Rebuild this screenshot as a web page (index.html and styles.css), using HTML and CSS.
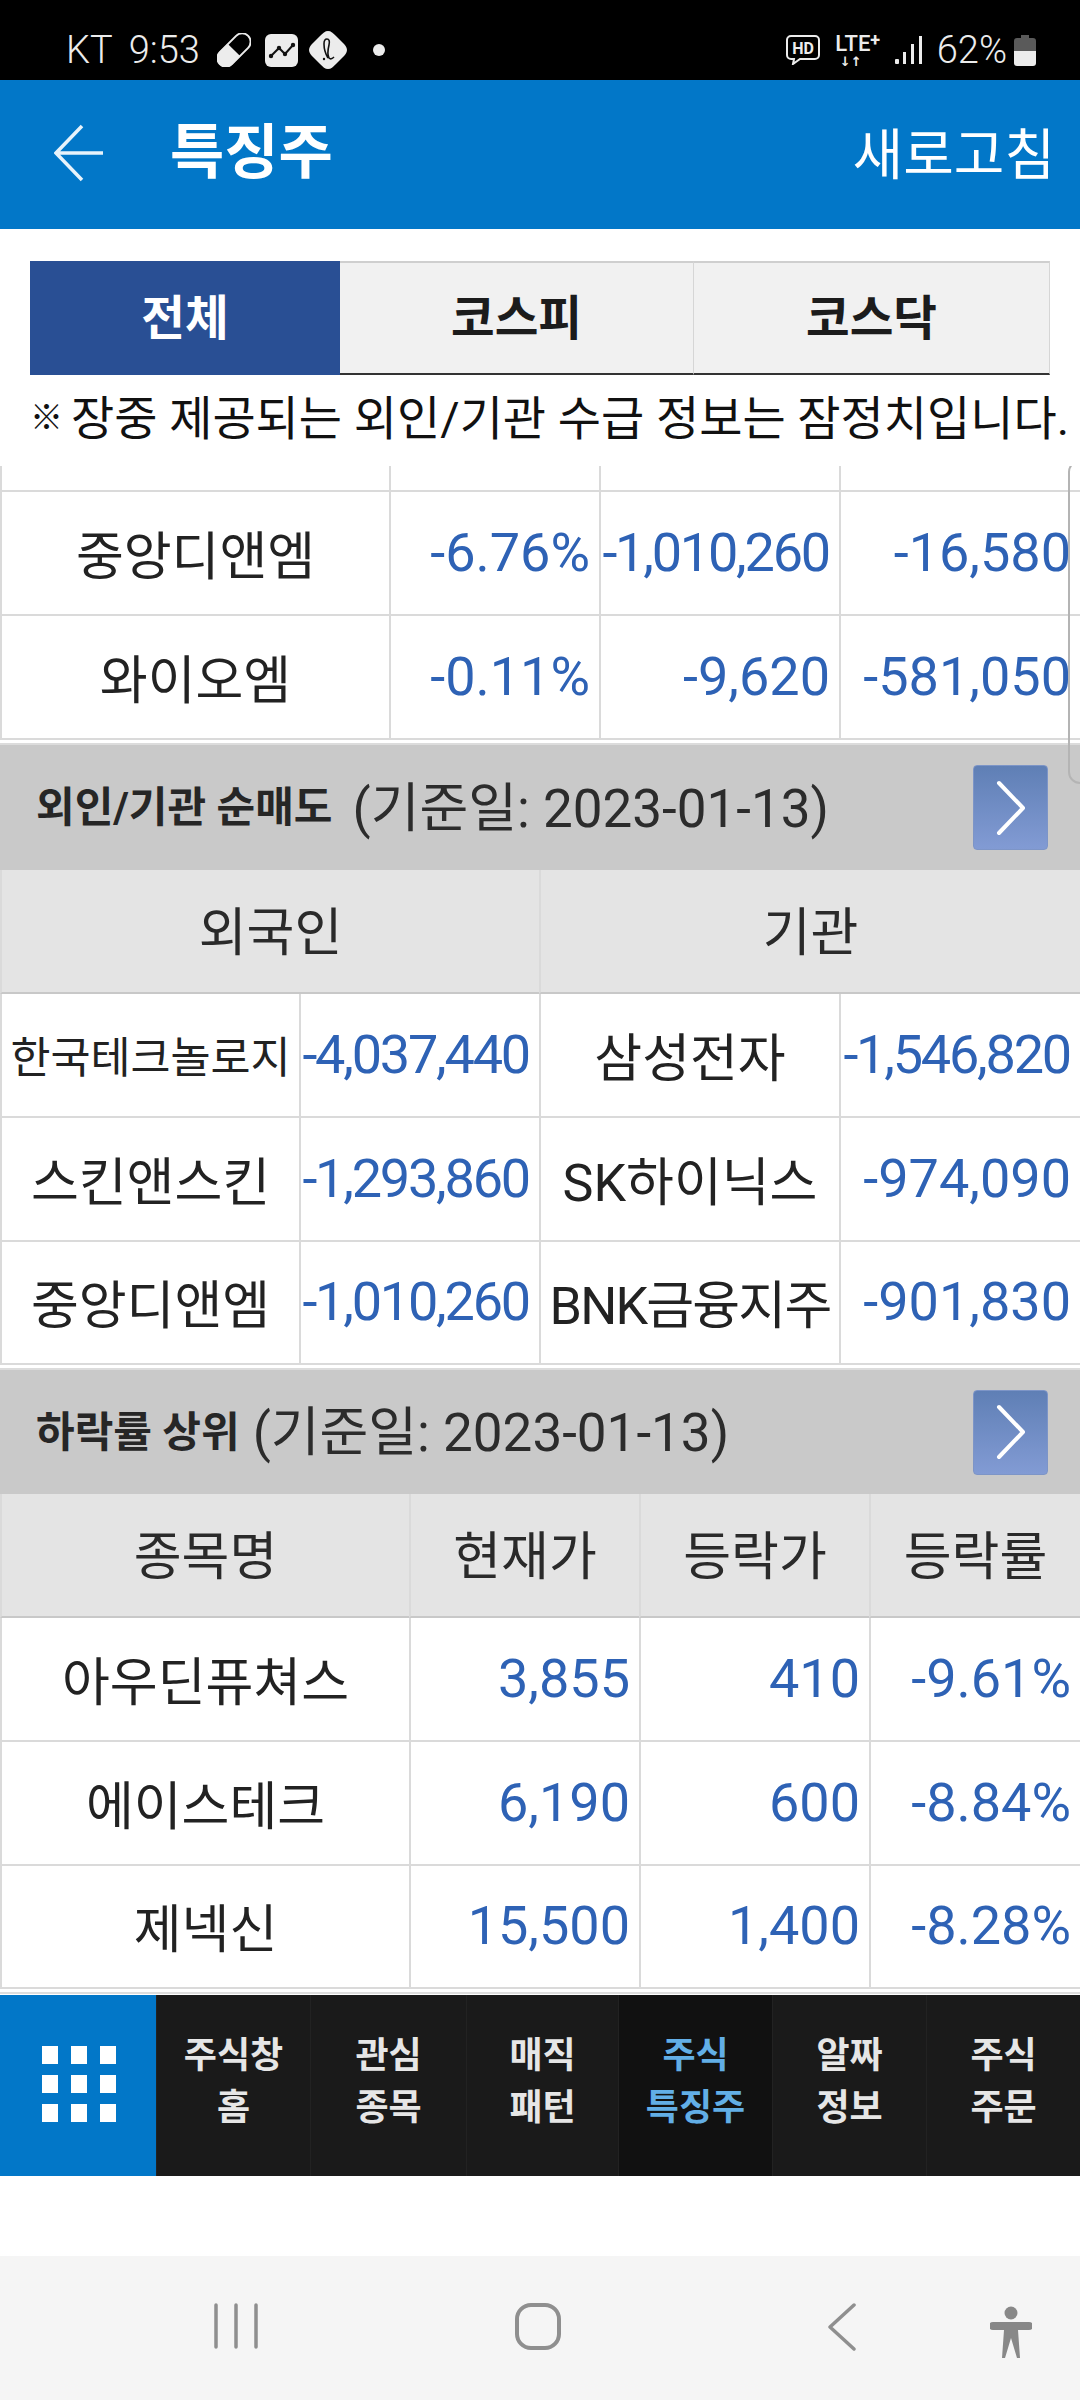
FILE: index.html
```html
<!DOCTYPE html>
<html lang="ko">
<head>
    <meta charset="UTF-8">
    <meta name="viewport" content="width=device-width, initial-scale=1.0">
    <title>특징주</title>
    <link rel="stylesheet" href="styles.css">
</head>
<body>
    <!-- 상태바 -->
    <div class="status-bar">
        <span class="status-text carrier">KT</span>
        <span class="status-text clock">9:53</span>
        <svg class="ico-pill" width="34" height="34" viewBox="0 0 34 34">
            <g transform="rotate(45 17 17)">
                <rect x="8.5" y="-3" width="17" height="40" rx="8.5" fill="none" stroke="#ececec" stroke-width="2"/>
                <path d="M8 17h18v11.500a9 9 0 0 1-18 0z" fill="#ececec"/>
            </g>
        </svg>
        <svg class="ico-chart" width="33" height="33" viewBox="0 0 33 33">
            <rect width="33" height="33" rx="6" fill="#ececec"/>
            <path d="M6 22l8-8 6 6 8-9" fill="none" stroke="#111" stroke-width="2"/>
            <circle cx="6" cy="22" r="2.200" fill="#111"/><circle cx="14" cy="14" r="2.200" fill="#111"/>
            <circle cx="20" cy="20" r="2.200" fill="#111"/><circle cx="28" cy="11" r="2.200" fill="#111"/>
        </svg>
        <svg class="ico-drop" width="38" height="38" viewBox="0 0 38 38">
            <path d="M19 0c3 0 5 2 8 5l6 6c3 3 5 5 5 8s-2 5-5 8l-6 6c-3 3-5 5-8 5s-5-2-8-5l-6-6c-3-3-5-5-5-8s2-5 5-8l6-6c3-3 5-5 8-5z" fill="#ececec"/>
            <path d="M19 27c-3-5-4-10-4-14 0-3 1-5 3-5s3 2 2 6c-1 4-2 9 0 13 1 1 3 1 5-1" fill="none" stroke="#111" stroke-width="1.600"/>
            <circle cx="15" cy="28" r="1.200" fill="#111"/>
        </svg>
        <span class="status-dot"></span>
        <span class="status-right">
            <svg class="ico-hd" width="36" height="30" viewBox="0 0 36 30">
                <path d="M6 1h24a4 4 0 0 1 4 4v15a4 4 0 0 1-4 4H15l-7 5 1-5H6a4 4 0 0 1-4-4V5a4 4 0 0 1 4-4z" fill="none" stroke="#ececec" stroke-width="2"/>
                <text x="18" y="19" class="svg-hd" text-anchor="middle">HD</text>
            </svg>
            <span class="lte">
                <span class="lte-text">LTE<b>+</b></span>
                <span class="lte-arrows">↓↑</span>
            </span>
            <svg class="ico-signal" width="28" height="28" viewBox="0 0 28 28">
                <rect x="0" y="23" width="4" height="5" rx="1" fill="#ececec"/>
                <rect x="8" y="16" width="3" height="12" fill="#ececec"/>
                <rect x="16" y="8" width="3" height="20" fill="#ececec"/>
                <rect x="24" y="0" width="3" height="28" fill="#ececec"/>
            </svg>
            <span class="status-text battery-text">62%</span>
            <svg class="ico-battery" width="22" height="31" viewBox="0 0 22 31">
                <path d="M7 0h8v3h4a3 3 0 0 1 3 3v10H0V6a3 3 0 0 1 3-3h4z" fill="#5a5a5a"/>
                <path d="M0 16h22v12a3 3 0 0 1-3 3H3a3 3 0 0 1-3-3z" fill="#ececec"/>
            </svg>
        </span>
    </div>

    <!-- 상단 타이틀 -->
    <header class="app-bar">
        <svg class="back-arrow" width="50" height="58" viewBox="0 0 50 58">
            <path d="M28 2L2 29l26 27M2 29h47" fill="none" stroke="#e8f3fb" stroke-width="3.500"/>
        </svg>
        <h1 class="app-title">특징주</h1>
        <span class="refresh">새로고침</span>
    </header>

    <div class="tabs">
        <div class="tab tab-all active">전체</div>
        <div class="tab tab-kospi">코스피</div>
        <div class="tab tab-kosdaq">코스닥</div>
    </div>

    <p class="notice"><span class="mark">※</span><span>장중 제공되는 외인/기관 수급 정보는 잠정치입니다.</span></p>

    <div class="content">
        <div class="scroll-thumb"></div>

        <table class="grid grid-top">
            <colgroup><col class="w389"><col class="w210"><col class="w240"><col class="w241"></colgroup>
            <tr class="stub"><td></td><td></td><td></td><td></td></tr>
            <tr><td class="name">중앙디앤엠</td><td class="num">-6.76%</td><td class="num tight">-1,010,260</td><td class="num">-16,580</td></tr>
            <tr><td class="name">와이오엠</td><td class="num">-0.11%</td><td class="num">-9,620</td><td class="num">-581,050</td></tr>
        </table>

        <div class="section-head section-sell">
            <span class="section-title">외인/기관 순매도</span>
            <span class="section-date">(기준일: 2023-01-13)</span>
            <span class="more-btn">
                <svg width="30" height="56" viewBox="0 0 30 56"><path d="M3 3l24 25L3 53" fill="none" stroke="#fff" stroke-width="4" stroke-linecap="round" stroke-linejoin="round"/></svg>
            </span>
        </div>
        <table class="grid">
            <colgroup><col class="w299"><col class="w240"><col class="w300"><col class="w241"></colgroup>
            <tr class="head"><th colspan="2">외국인</th><th colspan="2">기관</th></tr>
            <tr><td class="name name-sm">한국테크놀로지</td><td class="num tight">-4,037,440</td><td class="name">삼성전자</td><td class="num tight">-1,546,820</td></tr>
            <tr><td class="name">스킨앤스킨</td><td class="num tight">-1,293,860</td><td class="name">SK하이닉스</td><td class="num">-974,090</td></tr>
            <tr class="last"><td class="name">중앙디앤엠</td><td class="num tight">-1,010,260</td><td class="name name-bnk">BNK금융지주</td><td class="num">-901,830</td></tr>
        </table>

        <div class="section-head section-fall">
            <span class="section-title">하락률 상위</span>
            <span class="section-date">(기준일: 2023-01-13)</span>
            <span class="more-btn">
                <svg width="30" height="56" viewBox="0 0 30 56"><path d="M3 3l24 25L3 53" fill="none" stroke="#fff" stroke-width="4" stroke-linecap="round" stroke-linejoin="round"/></svg>
            </span>
        </div>
        <table class="grid">
            <colgroup><col class="w409"><col class="w230"><col class="w230"><col class="w211"></colgroup>
            <tr class="head"><th>종목명</th><th>현재가</th><th>등락가</th><th>등락률</th></tr>
            <tr><td class="name">아우딘퓨쳐스</td><td class="num">3,855</td><td class="num">410</td><td class="num">-9.61%</td></tr>
            <tr><td class="name">에이스테크</td><td class="num">6,190</td><td class="num">600</td><td class="num">-8.84%</td></tr>
            <tr class="last"><td class="name">제넥신</td><td class="num">15,500</td><td class="num">1,400</td><td class="num">-8.28%</td></tr>
        </table>
        <div class="end-line"></div>
    </div>

    <!-- 하단 메뉴 -->
    <nav class="menu">
        <div class="menu-home">
            <div class="dots">
                <i></i><i></i><i></i><i></i><i></i><i></i><i></i><i></i><i></i>
            </div>
        </div>
        <div class="menu-item">주식창<br>홈</div>
        <div class="menu-item">관심<br>종목</div>
        <div class="menu-item">매직<br>패턴</div>
        <div class="menu-item current">주식<br>특징주</div>
        <div class="menu-item">알짜<br>정보</div>
        <div class="menu-item">주식<br>주문</div>
    </nav>

    <div class="blank"></div>

    <div class="system-nav">
        <svg class="sys-recent" width="44" height="46" viewBox="0 0 44 46">
            <path d="M2 2v42M22 2v42M42 2v42" fill="none" stroke="#8f8f8f" stroke-width="3.500" stroke-linecap="round"/>
        </svg>
        <svg class="sys-home" width="46" height="47" viewBox="0 0 46 47">
            <rect x="2" y="2" width="42" height="43" rx="14" fill="none" stroke="#8f8f8f" stroke-width="4"/>
        </svg>
        <svg class="sys-back" width="28" height="48" viewBox="0 0 28 48">
            <path d="M26 2L2 24l24 22" fill="none" stroke="#8f8f8f" stroke-width="3.500" stroke-linecap="round" stroke-linejoin="round"/>
        </svg>
        <svg class="sys-a11y" width="42" height="52" viewBox="0 0 42 52">
            <circle cx="21" cy="7" r="6.500" fill="#888"/>
            <path d="M3 16h36a3 3 0 0 1 0 8H28l2 28h-3l-6-20-6 20h-3l2-28H3a3 3 0 0 1 0-8z" fill="#888"/>
        </svg>
    </div>
</body>
</html>
```

FILE: styles.css
```css
:root {
    --blue: #0277c8;
    --num-color: #2e62b5;
    --text-color: #222;
    --line-color: #dadada;
}

* {
    box-sizing: border-box;
}

body {
    margin: 0;
    width: 1080px;
    height: 2400px;
    overflow: hidden;
    display: flex;
    flex-direction: column;
    background: white;
    color: var(--text-color);
    font-family: Roboto, 'Noto Sans CJK KR', sans-serif;
}

/* status bar */
.status-bar {
    height: 80px;
    flex: none;
    background: black;
    display: flex;
    align-items: center;
    padding: 20px 44px 0 66px;
    color: #ececec;
}

.status-text {
    font-size: 38px;
    line-height: 1;
    font-weight: 300;
}

.clock {
    margin-left: 16px;
}

.ico-pill {
    margin-left: 17px;
}

.ico-chart {
    margin-left: 14px;
}

.ico-drop {
    margin-left: 11px;
}

.status-dot {
    width: 12px;
    height: 12px;
    border-radius: 50%;
    background: #ececec;
    margin-left: 26px;
}

.status-right {
    margin-left: auto;
    display: flex;
    align-items: center;
}

.svg-hd {
    font-size: 16px;
    font-weight: 700;
    fill: #ececec;
    font-family: Roboto, sans-serif;
}

.lte {
    margin-left: 10px;
    width: 54px;
    display: flex;
    flex-direction: column;
    align-items: center;
    line-height: 1;
}

.lte-text {
    font-size: 22px;
    font-weight: 500;
    height: 22px;
    white-space: nowrap;
}

.lte-text b {
    font-size: 18px;
    position: relative;
    top: -5px;
}

.lte-arrows {
    font-family: 'DejaVu Sans', sans-serif;
    font-size: 13px;
    font-weight: 700;
    margin-left: -14px;
}

.ico-signal {
    margin-left: 10px;
}

.battery-text {
    margin-left: 14px;
}

.ico-battery {
    margin-left: 7px;
}

/* app bar */
.app-bar {
    height: 149px;
    flex: none;
    background: var(--blue);
    color: white;
    display: flex;
    align-items: center;
    padding: 0 25px 4px 54px;
}

.app-title {
    margin: 0 0 0 66px;
    font-size: 59px;
    font-weight: 700;
    line-height: 1;
}

.refresh {
    margin: 6px 0 0 auto;
    font-size: 55px;
    line-height: 1;
}

/* tabs */
.tabs {
    margin: 32px 30px 0;
    height: 114px;
    flex: none;
    display: grid;
    grid-template-columns: 310px 354px 356px;
}

.tab {
    display: flex;
    align-items: center;
    justify-content: center;
    padding-bottom: 8px;
    font-size: 47.500px;
    font-weight: 700;
    color: #1c1c1c;
    background: #f1f1f1;
    border-top: 2px solid #cfcfcf;
    border-bottom: 2px solid #333;
    border-right: 1px solid #d6d6d6;
}

.tab.active {
    background: #294f94;
    color: white;
    border: none;
}

.notice {
    margin: 0;
    height: 91px;
    flex: none;
    padding: 0 0 12px 30px;
    display: flex;
    align-items: center;
    gap: 8px;
    font-size: 47px;
    color: #111;
    white-space: nowrap;
}

.mark {
    font-size: 33px;
}

/* scroll content */
.content {
    height: 1529px;
    flex: none;
    overflow: hidden;
    position: relative;
}

.scroll-thumb {
    position: absolute;
    top: -6px;
    right: -4px;
    width: 16px;
    height: 324px;
    border: 2px solid #b4b4b4;
    border-radius: 12px 0 0 12px;
}

.grid {
    width: 1080px;
    table-layout: fixed;
    border-collapse: separate;
    border-spacing: 0;
    margin-bottom: 3px;
}

.w210 { width: 210px; }
.w211 { width: 211px; }
.w230 { width: 230px; }
.w240 { width: 240px; }
.w241 { width: 241px; }
.w299 { width: 299px; }
.w300 { width: 300px; }
.w389 { width: 389px; }
.w409 { width: 409px; }

.grid tr {
    height: 124px;
}

.grid tr.stub {
    height: 26px;
}

.grid tr.last {
    height: 123px;
}

.grid td,
.grid th {
    border-left: 2px solid var(--line-color);
    border-bottom: 2px solid var(--line-color);
    padding: 0 0 2px;
    white-space: nowrap;
    overflow: visible;
}

.grid th {
    background: #e4e4e4;
    border-bottom-color: #c8c8c8;
    padding-bottom: 6px;
    font-weight: 400;
    font-size: 52px;
    color: #2a2a2a;
    text-align: center;
}

.grid-top tr.stub td {
    padding: 0;
}

.name {
    font-size: 52px;
    text-align: center;
}

.name-sm {
    font-size: 43.500px;
}

.name-bnk {
    letter-spacing: -1.800px;
}

.grid .num {
    font-size: 54px;
    text-align: right;
    padding-right: 9px;
    color: var(--num-color);
}

.grid .tight {
    letter-spacing: -2.200px;
    padding-right: 10px;
}

.section-head {
    height: 126px;
    background: #c9c9c9;
    display: flex;
    align-items: center;
    padding-left: 36px;
    border-top: 2px solid #dcdcdc;
}

.section-sell {
    height: 127px;
}

.section-title {
    font-size: 42px;
    font-weight: 700;
    color: #262626;
    margin-bottom: 8px;
}

.section-date {
    font-size: 53px;
    margin: 0 0 8px 20px;
    color: #2c2c2c;
}

.section-fall .section-date {
    margin-left: 13px;
}

.more-btn {
    margin-left: auto;
    margin-right: 32px;
    width: 75px;
    height: 85px;
    border-radius: 4px;
    border: 1px solid #7d95c7;
    background: linear-gradient(#5f7fb5, #829bd4);
    display: flex;
    align-items: center;
    justify-content: center;
}

.end-line {
    height: 2px;
    background: #dedede;
}

/* bottom menu */
.menu {
    height: 181px;
    flex: none;
    display: grid;
    grid-template-columns: 156px 154px 156px 152px 154px 154px 154px;
    background: #1a1a1a;
}

.menu-home {
    background: var(--blue);
    display: flex;
    align-items: center;
    justify-content: center;
    padding: 0 0 4px 2px;
}

.dots {
    display: grid;
    grid-template-columns: repeat(3, 16px);
    grid-auto-rows: 18px;
    gap: 11px 13px;
}

.dots i {
    background: white;
}

.menu-item {
    padding-top: 35px;
    text-align: center;
    font-size: 36px;
    font-weight: 700;
    line-height: 52px;
    color: #e6e6e6;
    border-left: 1px solid #222;
}

.menu-item.current {
    background: #111;
    color: #62aee6;
}

.blank {
    height: 80px;
    flex: none;
}

/* system nav */
.system-nav {
    height: 144px;
    flex: none;
    background: #f5f5f5;
    display: flex;
    align-items: flex-start;
    padding: 47px 0 0 214px;
}

.sys-home {
    margin-left: 257px;
}

.sys-back {
    margin-left: 267px;
}

.sys-a11y {
    margin-left: 134px;
    margin-top: 3px;
}
```
